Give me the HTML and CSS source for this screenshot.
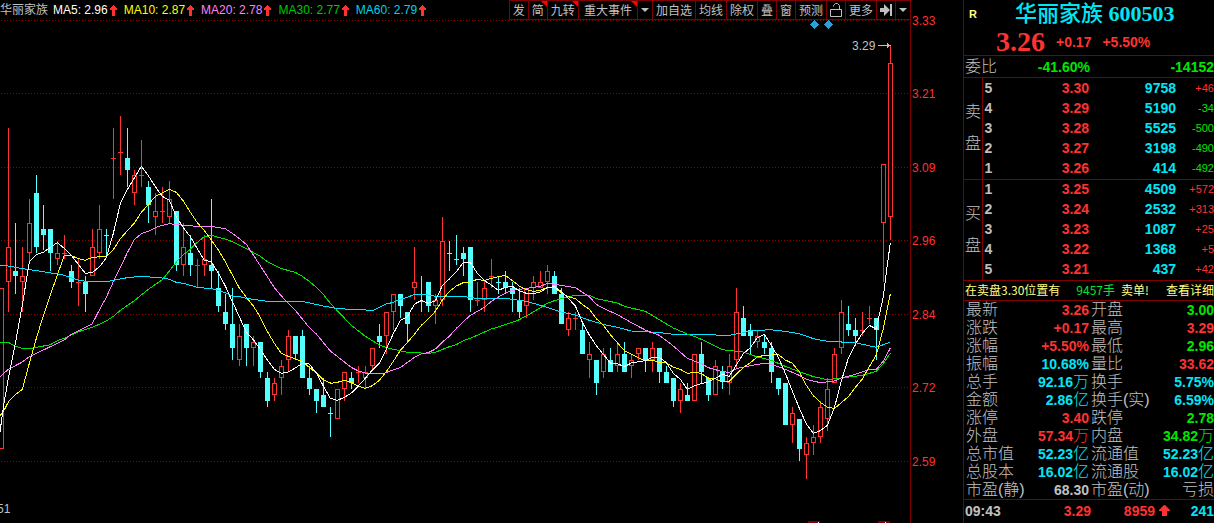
FILE: index.html
```html
<!DOCTYPE html>
<html lang="zh-CN">
<head>
<meta charset="utf-8">
<title>华丽家族 600503</title>
<link rel="stylesheet" href="styles.css">
</head>
<body>
<main class="terminal">
  <section class="chart">
    <header class="chart-head">
      <h2 class="chart-name">华丽家族</h2>
      <ul class="averages">
        <li class="white">MA5: 2.96<svg class="up" viewBox="0 0 7 11"><path d="M3 0h1l3 4v1H5v6H2V5H0V4z"/></svg></li>
        <li class="yellow">MA10: 2.87<svg class="up" viewBox="0 0 7 11"><path d="M3 0h1l3 4v1H5v6H2V5H0V4z"/></svg></li>
        <li class="pink">MA20: 2.78<svg class="up" viewBox="0 0 7 11"><path d="M3 0h1l3 4v1H5v6H2V5H0V4z"/></svg></li>
        <li class="dark-green">MA30: 2.77<svg class="up" viewBox="0 0 7 11"><path d="M3 0h1l3 4v1H5v6H2V5H0V4z"/></svg></li>
        <li class="teal">MA60: 2.79<svg class="up" viewBox="0 0 7 11"><path d="M3 0h1l3 4v1H5v6H2V5H0V4z"/></svg></li>
      </ul>
      <nav class="tools">
        <button class="tool">发</button>
        <button class="tool flag">简</button>
        <button class="tool flag">九转</button>
        <button class="tool wide flag">重大事件</button>
        <button class="tool drop" aria-label="展开事件"><svg viewBox="0 0 8 4"><path d="M0 0h8L4 4z"/></svg></button>
        <button class="tool">加自选</button>
        <button class="tool">均线</button>
        <button class="tool">除权</button>
        <button class="tool">叠</button>
        <button class="tool">窗</button>
        <button class="tool">预测</button>
        <button class="tool icon" aria-label="锁定"><svg viewBox="0 0 12 14"><path class="line" d="M.5 6.500h11v7H.5zM3.500 3.500v-1l2-2h2l2 2v4"/></svg></button>
        <button class="tool">更多</button>
        <button class="tool icon" aria-label="最右"><svg viewBox="0 0 12 14"><path d="M0 5h4V1l6 6-6 6V9H0zM10 1h2v12h-2z"/></svg></button>
        <button class="tool drop" aria-label="展开菜单"><svg viewBox="0 0 8 4"><path d="M0 0h8L4 4z"/></svg></button>
      </nav>
    </header>
    <svg class="plot" id="plot" viewBox="0 20 963 503" role="img" aria-label="日K线图"></svg>
  </section>

  <aside class="quote">
    <header class="quote-head">
      <span class="tag">R</span>
      <h1 class="title"><span class="title-name">华丽家族</span> 600503</h1>
      <p class="price red"><strong class="last">3.26</strong><b>+0.17</b><b>+5.50%</b></p>
    </header>
    <p class="ratio green"><span class="label">委比</span><b class="ratio-value">-41.60%</b><b>-14152</b></p>

    <table class="book">
      <colgroup><col class="c-side"><col class="c-level"><col class="c-price"><col class="c-volume"><col class="c-delta"></colgroup>
      <tbody>
        <tr><th class="side" rowspan="5" scope="rowgroup">卖盘</th><td class="level">5</td><td class="red">3.30</td><td class="cyan">9758</td><td class="delta red">+46</td></tr>
        <tr><td class="level">4</td><td class="red">3.29</td><td class="cyan">5190</td><td class="delta green">-34</td></tr>
        <tr><td class="level">3</td><td class="red">3.28</td><td class="cyan">5525</td><td class="delta green">-500</td></tr>
        <tr><td class="level">2</td><td class="red">3.27</td><td class="cyan">3198</td><td class="delta green">-490</td></tr>
        <tr><td class="level">1</td><td class="red">3.26</td><td class="cyan">414</td><td class="delta green">-492</td></tr>
      </tbody>
      <tbody>
        <tr><th class="side" rowspan="5" scope="rowgroup">买盘</th><td class="level">1</td><td class="red">3.25</td><td class="cyan">4509</td><td class="delta red">+572</td></tr>
        <tr><td class="level">2</td><td class="red">3.24</td><td class="cyan">2532</td><td class="delta red">+313</td></tr>
        <tr><td class="level">3</td><td class="red">3.23</td><td class="cyan">1087</td><td class="delta red">+25</td></tr>
        <tr><td class="level">4</td><td class="red">3.22</td><td class="cyan">1368</td><td class="delta red">+5</td></tr>
        <tr><td class="level">5</td><td class="red">3.21</td><td class="cyan">437</td><td class="delta red">+42</td></tr>
      </tbody>
    </table>

    <p class="notice"><span>在卖盘3.30位置有</span><span class="lots">9457手</span><span>卖单!</span><a class="more" href="#detail">查看详细</a></p>

    <table class="stats">
      <colgroup><col class="c-label"><col class="c-value"><col class="c-label"><col class="c-value"></colgroup>
      <tbody>
        <tr><th>最新</th><td class="red">3.26</td><th>开盘</th><td class="green">3.00</td></tr>
        <tr><th>涨跌</th><td class="red">+0.17</td><th>最高</th><td class="red">3.29</td></tr>
        <tr><th>涨幅</th><td class="red">+5.50%</td><th>最低</th><td class="green">2.96</td></tr>
        <tr><th>振幅</th><td class="cyan">10.68%</td><th>量比</th><td class="red">33.62</td></tr>
        <tr><th>总手</th><td class="cyan">92.16<i>万</i></td><th>换手</th><td class="cyan">5.75%</td></tr>
        <tr><th>金额</th><td class="cyan">2.86<i>亿</i></td><th>换手(实)</th><td class="cyan">6.59%</td></tr>
        <tr><th>涨停</th><td class="red">3.40</td><th>跌停</th><td class="green">2.78</td></tr>
        <tr><th>外盘</th><td class="red">57.34<i>万</i></td><th>内盘</th><td class="green">34.82<i>万</i></td></tr>
        <tr><th>总市值</th><td class="cyan">52.23<i>亿</i></td><th>流通值</th><td class="cyan">52.23<i>亿</i></td></tr>
        <tr><th>总股本</th><td class="cyan">16.02<i>亿</i></td><th>流通股</th><td class="cyan">16.02<i>亿</i></td></tr>
        <tr><th>市盈(静)</th><td>68.30</td><th>市盈(动)</th><td><i>亏损</i></td></tr>
      </tbody>
    </table>

    <p class="tick"><time>09:43</time><span class="red tick-price">3.29</span><span class="red tick-volume">8959<svg class="big-up" viewBox="0 0 11 11"><path d="M5 0h1l5 5v1H8v5H3V6H0V5z"/></svg></span><span class="cyan tick-count">241</span></p>
  </aside>
</main>
<script src="chart.js"></script>
</body>
</html>
```
FILE: styles.css
```css
* { box-sizing: border-box; }

body {
  margin: 0;
  background: #000;
  color: #c0c0c0;
  font: 12px/16px "Liberation Sans", "Noto Sans CJK SC", sans-serif;
  overflow: hidden;
}

h1, h2, p, ul { margin: 0; padding: 0; font-weight: normal; }

.red { color: #ff3232; }
.green { color: #00e600; }
.cyan { color: #00e6f6; }
.white { color: #fff; }
.yellow { color: #ffff00; }
.pink { color: #ff80ff; }
.dark-green { color: #00c800; }
.teal { color: #00d2e6; }

.terminal { display: flex; align-items: stretch; min-height: 100vh; }

/* Chart */
.chart { flex: 1; min-width: 0; }

.chart-head {
  display: flex;
  align-items: center;
  height: 20px;
  margin-right: 52px;
}

.chart-name { font-size: 12px; white-space: nowrap; }

.averages {
  display: flex;
  gap: 7px;
  margin-left: 5px;
  list-style: none;
  white-space: nowrap;
}

.averages li { display: flex; align-items: center; gap: 2px; }
.up { width: 7px; height: 11px; fill: #ff3232; shape-rendering: crispEdges; }

.tools { display: flex; height: 20px; margin-left: auto; border-right: 1px solid #800000; }

.tool {
  position: relative;
  display: flex;
  align-items: center;
  justify-content: center;
  padding: 0 3px;
  border: solid #800000;
  border-width: 1px 0 1px 1px;
  background: #000;
  color: #c0c0c0;
  font: 12px/16px "Noto Sans CJK SC", sans-serif;
  white-space: nowrap;
  cursor: pointer;
}

.tool svg { width: 12px; height: 14px; fill: currentColor; }
.tool .line { fill: none; stroke: currentColor; }
.wide { padding: 0 5px; }
.tool.drop { width: 15px; }
.tool.drop svg { width: 8px; height: 4px; }

.flag::after {
  content: "";
  position: absolute;
  top: 0;
  right: 0;
  border: 3px solid;
  border-color: #f00 #f00 transparent transparent;
}

.plot { display: block; width: 100%; height: auto; overflow: visible; shape-rendering: crispEdges; }
.grid { stroke: #900000; stroke-dasharray: 1 2; }
.axis { stroke: #800000; }
.scale { fill: #ff3232; font-size: 12px; }
.note { fill: #c0c0c0; font-size: 12px; }
.note-line { stroke: #c0c0c0; }
.note-head { fill: #c0c0c0; }
.mark { fill: #2e9fd0; }
.event { fill: #800000; }
.event-tick { fill: #fff; }
.rise { fill: #ff3232; }
.rise-body { fill: #000; stroke: #ff3232; }
.fall { fill: #54ffff; }
.ma { fill: none; stroke-width: 1px; }
.ma-white { stroke: #fff; }
.ma-yellow { stroke: #ffff00; }
.ma-pink { stroke: #ff80ff; }
.ma-green { stroke: #00e600; }
.ma-cyan { stroke: #00e6ff; }

/* Quote panel */
.quote {
  flex: 0 0 251px;
  border-left: 1px solid #800000;
  font-size: 14px;
  font-weight: bold;
  line-height: 18px;
}

.quote-head {
  display: grid;
  grid-template-columns: 51px 1fr;
  align-items: center;
  height: 56px;
  border-bottom: 1px solid #800000;
}

.tag { padding-left: 5px; color: #ffff80; font-size: 11px; }

.title {
  color: #00e6f6;
  font: bold 22px/28px "Liberation Serif", "Noto Sans CJK SC", serif;
  white-space: nowrap;
}

.title-name { font-weight: 500; }

.price { grid-column: 1 / 3; display: flex; align-items: center; gap: 11px; padding-left: 32px; }
.last { font: bold 28px/26px "Liberation Serif", serif; }

.label, .side, .stats th, .stats i {
  color: #c0c0c0;
  font: normal 300 16px/18px "Liberation Sans", "Noto Sans CJK SC", sans-serif;
}

.ratio {
  display: grid;
  grid-template-columns: 33px 92px 1fr;
  align-items: center;
  height: 22px;
  padding-left: 1px;
  border-bottom: 1px solid #800000;
  text-align: right;
}

.ratio .label { text-align: left; }

table { width: 100%; border-collapse: collapse; table-layout: fixed; }
td, th { padding: 0; text-align: right; white-space: nowrap; }

.c-side { width: 18px; }
.c-level { width: 20px; }
.c-volume { width: 87px; }
.c-delta { width: 38px; }
.book tr { height: 20px; }
.book tr:last-child { height: 21px; }
.book tbody { border-bottom: 1px solid #800000; }
.book .side {
  padding-left: 1px;
  border-right: 1px solid #800000;
  line-height: 32px;
  text-align: left;
  white-space: normal;
}
.book .level { padding-left: 2px; text-align: left; }
.book .delta { font-size: 11px; font-weight: normal; }

.notice {
  display: flex;
  align-items: center;
  height: 20px;
  padding-left: 1px;
  border-bottom: 1px solid #800000;
  color: #ffff80;
  font: 12px/18px "Noto Sans CJK SC", sans-serif;
  white-space: nowrap;
}

.lots { margin: 0 6px 0 16px; color: #00e632; }
.more { margin-left: auto; color: inherit; text-decoration: none; }

.stats { border-bottom: 1px solid #800000; }
.stats tr { height: 18px; }
.stats th { padding-left: 2px; text-align: left; }
.stats i { color: inherit; line-height: 16px; }
.stats td { line-height: 16px; }

.tick {
  display: grid;
  grid-template-columns: 50px 76px 79px 1fr;
  align-items: center;
  height: 22px;
  padding-left: 1px;
  font-weight: bold;
  text-align: right;
}

.tick time { text-align: left; }
.tick-volume { display: flex; align-items: center; justify-content: flex-end; gap: 4px; }
.big-up { width: 11px; height: 11px; fill: #ff3232; }
```
FILE: chart.js
```js
// Coordinates are stored in thirds of a plot unit, relative to the block origin.
// Candle: [direction, high, open/close top, open/close bottom, low], one every 7 units.
const blocks = [
  { x: 1, y: 90, candles: [
    ["r",595,595,1076,1076],["r",114,472,575,666],["c",399,543,558,612],["r",471,558,575,666],["r",327,400,488,520],
    ["c",255,309,471,489],["c",345,417,435,480],["c",417,417,489,543],["r",453,489,507,525],["r",435,490,490,507],
    ["c",525,543,576,594],["r",507,577,577,648],["c",558,576,612,666],["r",417,472,557,557],["r",345,418,489,507],
    ["c",417,436,436,505],["r",114,205,205,327],["r",78,187,187,255],["c",114,204,240,291],["r",240,255,308,346],
    ["r",150,256,256,291],["c",273,291,345,399],["r",309,363,381,435],["r",291,364,364,399],["r",273,328,380,400],
    ["c",363,363,525,543],["r",399,472,524,558],["c",435,489,525,558],["r",507,526,526,591],["r",435,507,524,558],
    ["c",327,525,543,595],["c",543,594,648,666],["c",612,666,702,720],["c",594,702,774,810]] },
  { x: 239, y: 190, candles: [
    ["r",402,438,510,528],["c",402,402,474,528],["r",438,457,473,528],["c",456,456,546,564],["c",546,564,633,651],
    ["r",564,580,615,633],["r",510,528,563,615],["r",420,438,509,545],["c",438,438,492,510],["c",420,438,564,564],
    ["c",528,564,597,615],["c",597,597,633,669],["c",564,615,651,651],["c",651,670,670,741],["r",597,598,686,686],
    ["r",546,546,597,633],["c",546,564,580,597],["r",528,547,547,580],["r",528,546,563,597],["r",474,475,527,545],
    ["c",402,438,456,474],["r",366,366,437,492],["r",312,312,366,420],["c",312,312,348,384],["c",366,366,402,459],
    ["r",171,276,294,330],["c",258,333,333,366],["c",276,276,348,366],["r",312,330,348,402],["r",81,153,329,348],
    ["c",153,190,190,243],["c",135,208,208,225],["c",171,189,207,258]] },
  { x: 470, y: 220, candles: [
    ["c",81,81,240,276],["r",186,241,241,258],["r",181,205,240,276],["r",117,169,169,204],["c",171,187,187,222],
    ["c",153,186,204,222],["c",186,204,222,276],["c",204,240,276,294],["r",204,204,258,294],["r",168,186,204,240],
    ["r",153,186,204,204],["r",135,153,186,222],["c",153,168,222,222],["c",204,222,312,312],["r",276,294,329,348],
    ["r",276,295,295,330],["c",312,330,402,402],["r",366,402,420,474],["c",420,420,489,525],["r",384,402,456,474],
    ["c",384,420,456,456],["r",366,402,438,456],["c",366,402,456,456],["r",402,420,437,474],["r",384,384,402,420],
    ["c",384,384,420,456],["r",366,384,420,456],["c",384,384,456,489],["c",438,456,489,489],["c",474,474,543,561],
    ["r",489,507,543,579],["c",489,525,543,543],["r",402,402,543,543]] },
  { x: 701, y: 280, candles: [
    ["c",186,222,276,310],["c",291,294,345,363],["r",240,259,344,344],["c",258,276,307,327],["r",222,259,307,345],
    ["r",24,97,238,265],["c",78,114,168,168],["c",132,150,168,222],["r",150,168,185,204],["c",168,186,204,222],
    ["c",186,204,276,309],["c",294,294,327,345],["c",309,309,435,435],["r",381,400,434,489],["c",417,417,507,543],
    ["r",471,489,524,597],["r",435,471,488,525],["r",363,381,470,489],["r",294,328,416,453],["r",204,222,308,308],
    ["r",60,97,203,222],["c",78,132,150,168],["c",114,150,168,198],["r",96,151,151,168],["r",78,115,115,132],
    ["c",114,114,150,240],["r",-348,-348,-171,6],["r",-705,-651,-190,-120]] }
];

// Moving averages: one list of points per block origin.
const origins = [[0, 90], [230, 190], [460, 220], [690, 280]];
const averages = {
  cyan: [
    "0,527 25,528 67,536 130,545 190,555 235,570 256,574 325,574 382,563 424,559 487,564 508,568 529,577 550,580 571,586 592,592 634,596 655,601 676,608 697,618",
    "28,320 49,325 112,334 217,334 280,348 322,356 430,361 469,342 490,337 511,328 532,322 553,313 595,315 616,319 700,319",
    "31,233 52,235 136,235 199,244 262,262 304,276 346,285 388,301 430,313 472,322 514,333 600,338 640,343",
    "0,163 118,166 160,158 181,153 240,149 286,154 328,161 370,176 412,184 496,188 559,202 601,186"],
  green: [
    "0,757 25,757 46,769 67,775 100,774 151,764 172,752 193,745 235,725 277,712 319,693 340,679 361,661 403,632 445,598 487,569 508,543 529,516 550,494 571,478 592,457 613,440 634,436 655,442 676,447 697,455",
    "28,165 49,176 91,199 112,215 154,236 196,247 217,259 238,274 259,292 280,313 301,340 322,362 364,406 406,439 448,465 469,473 532,487 595,490 616,487 658,470 679,464 700,452",
    "31,355 94,327 115,321 157,307 178,299 220,276 262,250 283,242 325,230 346,226 388,226 409,236 472,249 493,259 556,274 598,299 640,324 682,342",
    "13,169 34,178 97,209 139,214 160,216 202,231 244,241 286,259 328,275 370,290 412,299 454,294 517,286 559,274 580,250 601,220"],
  pink: [
    "0,860 25,838 67,816 88,800 193,750 214,733 277,701 298,660 319,622 340,575 361,532 382,488 403,449 424,431 445,424 466,413 487,406 508,401 550,406 592,409 634,409 676,416 697,430",
    "28,146 49,163 70,195 112,260 133,293 154,318 196,361 238,413 259,432 301,483 343,516 364,532 385,543 406,549 427,551 461,550 490,540 511,533 553,502 574,491 595,488 616,477 637,456 658,439 679,415 700,395",
    "31,286 73,262 94,244 136,219 157,211 199,205 241,199 262,190 304,196 346,203 388,230 409,253 430,265 472,284 514,308 556,330 598,346 640,378 682,415",
    "13,243 34,250 55,263 97,275 118,277 139,266 181,257 223,250 244,253 286,268 328,286 349,298 391,308 433,303 454,294 496,283 538,269 559,268 580,243 601,204"],
  yellow: [
    "0,977 10,965 25,936 46,914 67,898 88,820 109,745 130,677 151,615 172,555 193,496 214,497 235,506 256,511 277,502 319,499 340,479 361,446 403,399 424,367 445,344 466,319 487,309 508,298 529,307 550,333 571,367 592,398 613,422 634,450 655,480 676,515 697,555",
    "28,294 49,322 70,348 91,382 112,424 133,460 154,490 175,499 217,515 238,532 259,549 280,570 304,580 322,577 343,571 364,577 385,589 406,595 427,587 448,571 469,545 490,514 511,481 532,458 553,433 574,406 595,386 616,364 637,330 658,304 679,288 700,278",
    "31,186 52,178 73,182 94,175 115,170 136,166 157,182 178,198 199,209 220,214 241,211 262,202 283,202 304,219 325,230 346,236 367,253 388,268 409,296 430,316 451,344 472,368 493,392 514,403 535,413 556,423 577,421 598,427 619,429 640,441 661,448 682,460",
    "13,277 34,280 55,295 76,296 97,306 118,304 139,282 160,263 181,248 202,231 223,226 265,224 286,240 307,250 328,275 349,316 370,347 391,367 412,381 433,386 454,368 475,350 496,322 517,297 538,260 559,225 580,145 601,42"],
  white: [
    "0,1025 12,940 25,865 46,760 67,645 88,516 109,494 130,487 151,472 172,458 193,475 214,496 235,523 256,550 277,547 298,531 319,503 340,430 361,341 382,299 403,264 424,229 445,257 466,290 487,319 508,331 529,380 550,413 571,440 592,476 613,511 634,515 655,550 676,588 697,635",
    "28,380 49,427 70,449 91,478 112,510 133,538 154,550 175,546 196,534 217,520 238,522 259,549 280,588 301,625 322,631 343,622 364,609 385,588 406,565 427,540 448,520 469,477 490,431 511,391 532,380 553,343 574,331 595,340 616,333 637,287 658,267 679,245 700,217",
    "31,127 52,160 73,182 94,195 115,211 136,202 157,199 178,212 199,220 220,221 241,216 262,203 283,200 304,215 325,235 346,258 367,307 388,345 409,377 430,403 451,429 472,431 493,440 514,429 556,422 577,412 598,412 619,428 640,460 661,478 682,508",
    "13,318 34,311 55,306 76,295 97,283 118,289 139,255 160,221 181,203 202,173 223,163 244,196 265,232 286,280 307,333 328,385 349,432 370,460 391,452 412,436 433,384 454,303 475,235 496,192 517,160 538,136 559,147 570,95 580,50 586,0 601,-112"]
};

const plot = document.getElementById("plot");

function add(tag, attributes, text) {
  const node = document.createElementNS("http://www.w3.org/2000/svg", tag);
  for (const key in attributes) node.setAttribute(key, attributes[key]);
  if (text) node.textContent = text;
  plot.append(node);
}

function bar(cls, x, y, width, height) {
  add("rect", { class: cls, x, y, width, height });
}

const prices = { 20: "3.33", 93: "3.21", 167: "3.09", 240: "2.96", 314: "2.84", 387: "2.72", 461: "2.59" };
for (const key in prices) {
  const y = Number(key);
  add("line", { class: "grid", x1: 1, x2: 910, y1: y + 0.5, y2: y + 0.5 });
  add("text", { class: "scale", x: 912, y: y + 5 }, prices[key]);
}
add("line", { class: "axis", x1: 910.5, x2: 910.5, y1: 0, y2: 523 });

for (const block of blocks) {
  block.candles.forEach(([kind, high, top, bottom, low], i) => {
    const x = block.x + i * 7;
    const px = v => block.y + Math.floor(v / 3);
    const cls = kind === "r" ? "rise" : "fall";
    bar(cls, x, px(high), 1, px(low) - px(high));
    if (top === bottom) {
      bar(cls, x - 2, px(top), 5, 1);
    } else if (kind === "c") {
      bar(cls, x - 2, px(top), 5, px(bottom) - px(top));
    } else {
      bar("rise-body", x - 1.5, px(top) + 0.5, 4, px(bottom - 1) - px(top));
    }
  });
}

for (const name in averages) {
  const points = averages[name].flatMap((list, i) => list.split(" ").map(pair => {
    const [x, y] = pair.split(",").map(Number);
    return `${origins[i][0] + x / 3},${origins[i][1] + y / 3}`;
  }));
  add("polyline", { class: `ma ma-${name}`, points: points.join(" ") });
}

add("text", { class: "note", x: 852, y: 50 }, "3.29");
add("line", { class: "note-line", x1: 878, x2: 890, y1: 45.5, y2: 45.5 });
add("path", { class: "note-head", d: "M887 43l4 2.500-4 2.500z" });
add("path", { class: "mark", d: "M814.500 20l4.500 4.500-4.500 4.500-4.500-4.500z" });
add("path", { class: "mark", d: "M828.500 20l4.500 4.500-4.500 4.500-4.500-4.500z" });
bar("event", 808, 521, 12, 2);
bar("event", 878, 521, 12, 2);
bar("event-tick", 818, 522, 1, 1);
bar("event-tick", 885, 522, 1, 1);
add("text", { class: "note", x: -3, y: 513 }, "51");
```
